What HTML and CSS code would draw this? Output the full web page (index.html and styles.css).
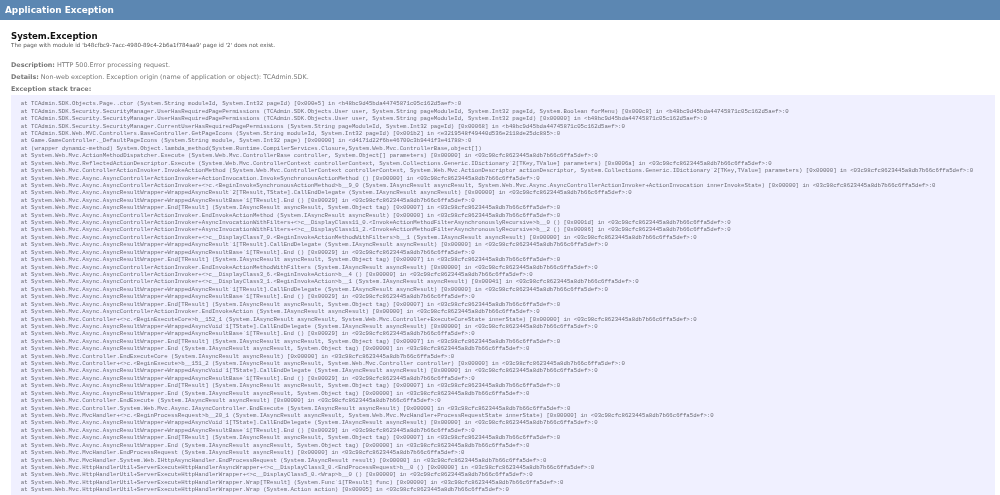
FILE: index.html
```html
<!DOCTYPE html>
<html lang="en">
<head>
<meta charset="utf-8">
<title>Application Exception</title>
<link rel="stylesheet" href="styles.css">
</head>
<body>
<div class="page">
<header class="banner">Application Exception</header>
<main class="content">
<h2 class="title">System.Exception</h2>
<p class="message">The page with module id 'b48cfbc9-7acc-4980-89c4-2b6a1f784aa9' page id '2' does not exist.</p>
<p class="info first"><b>Description:</b> HTTP 500.Error processing request.</p>
<p class="info"><b>Details:</b> Non-web exception. Exception origin (name of application or object): TCAdmin.SDK.</p>
<p class="info trace-label"><b>Exception stack trace:</b></p>
<pre class="trace">  at TCAdmin.SDK.Objects.Page..ctor (System.String moduleId, System.Int32 pageId) [0x000e5] in &lt;b48bc9d45bda44745871c05c162d5aef&gt;:0
  at TCAdmin.SDK.Security.SecurityManager.UserHasRequiredPagePermissions (TCAdmin.SDK.Objects.User user, System.String pageModuleId, System.Int32 pageId, System.Boolean forMenu) [0x000c8] in &lt;b48bc9d45bda44745871c05c162d5aef&gt;:0
  at TCAdmin.SDK.Security.SecurityManager.UserHasRequiredPagePermissions (TCAdmin.SDK.Objects.User user, System.String pageModuleId, System.Int32 pageId) [0x00000] in &lt;b48bc9d45bda44745871c05c162d5aef&gt;:0
  at TCAdmin.SDK.Security.SecurityManager.CurrentUserHasRequiredPagePermissions (System.String pageModuleId, System.Int32 pageId) [0x00068] in &lt;b48bc9d45bda44745871c05c162d5aef&gt;:0
  at TCAdmin.SDK.Web.MVC.Controllers.BaseController.GetPageIcons (System.String moduleId, System.Int32 pageId) [0x001b2] in &lt;e3219548f49440d536e2118de25dc885&gt;:0
  at Game.GameController._DefaultPageIcons (System.String module, System.Int32 page) [0x00000] in &lt;d4171d22f6be46700c3b9441f3e41788&gt;:0
  at (wrapper dynamic-method) System.Object.lambda_method(System.Runtime.CompilerServices.Closure,System.Web.Mvc.ControllerBase,object[])
  at System.Web.Mvc.ActionMethodDispatcher.Execute (System.Web.Mvc.ControllerBase controller, System.Object[] parameters) [0x00000] in &lt;03c98cfc8623445a8db7b66c6ffa5def&gt;:0
  at System.Web.Mvc.ReflectedActionDescriptor.Execute (System.Web.Mvc.ControllerContext controllerContext, System.Collections.Generic.IDictionary`2[TKey,TValue] parameters) [0x0006a] in &lt;03c98cfc8623445a8db7b66c6ffa5def&gt;:0
  at System.Web.Mvc.ControllerActionInvoker.InvokeActionMethod (System.Web.Mvc.ControllerContext controllerContext, System.Web.Mvc.ActionDescriptor actionDescriptor, System.Collections.Generic.IDictionary`2[TKey,TValue] parameters) [0x00000] in &lt;03c98cfc8623445a8db7b66c6ffa5def&gt;:0
  at System.Web.Mvc.Async.AsyncControllerActionInvoker+ActionInvocation.InvokeSynchronousActionMethod () [0x00000] in &lt;03c98cfc8623445a8db7b66c6ffa5def&gt;:0
  at System.Web.Mvc.Async.AsyncControllerActionInvoker+&lt;&gt;c.&lt;BeginInvokeSynchronousActionMethod&gt;b__9_0 (System.IAsyncResult asyncResult, System.Web.Mvc.Async.AsyncControllerActionInvoker+ActionInvocation innerInvokeState) [0x00000] in &lt;03c98cfc8623445a8db7b66c6ffa5def&gt;:0
  at System.Web.Mvc.Async.AsyncResultWrapper+WrappedAsyncResult`2[TResult,TState].CallEndDelegate (System.IAsyncResult asyncResult) [0x00000] in &lt;03c98cfc8623445a8db7b66c6ffa5def&gt;:0
  at System.Web.Mvc.Async.AsyncResultWrapper+WrappedAsyncResultBase`1[TResult].End () [0x00029] in &lt;03c98cfc8623445a8db7b66c6ffa5def&gt;:0
  at System.Web.Mvc.Async.AsyncResultWrapper.End[TResult] (System.IAsyncResult asyncResult, System.Object tag) [0x00007] in &lt;03c98cfc8623445a8db7b66c6ffa5def&gt;:0
  at System.Web.Mvc.Async.AsyncControllerActionInvoker.EndInvokeActionMethod (System.IAsyncResult asyncResult) [0x00000] in &lt;03c98cfc8623445a8db7b66c6ffa5def&gt;:0
  at System.Web.Mvc.Async.AsyncControllerActionInvoker+AsyncInvocationWithFilters+&lt;&gt;c__DisplayClass11_0.&lt;InvokeActionMethodFilterAsynchronouslyRecursive&gt;b__0 () [0x0001d] in &lt;03c98cfc8623445a8db7b66c6ffa5def&gt;:0
  at System.Web.Mvc.Async.AsyncControllerActionInvoker+AsyncInvocationWithFilters+&lt;&gt;c__DisplayClass11_2.&lt;InvokeActionMethodFilterAsynchronouslyRecursive&gt;b__2 () [0x00086] in &lt;03c98cfc8623445a8db7b66c6ffa5def&gt;:0
  at System.Web.Mvc.Async.AsyncControllerActionInvoker+&lt;&gt;c__DisplayClass7_0.&lt;BeginInvokeActionMethodWithFilters&gt;b__1 (System.IAsyncResult asyncResult) [0x00000] in &lt;03c98cfc8623445a8db7b66c6ffa5def&gt;:0
  at System.Web.Mvc.Async.AsyncResultWrapper+WrappedAsyncResult`1[TResult].CallEndDelegate (System.IAsyncResult asyncResult) [0x00000] in &lt;03c98cfc8623445a8db7b66c6ffa5def&gt;:0
  at System.Web.Mvc.Async.AsyncResultWrapper+WrappedAsyncResultBase`1[TResult].End () [0x00029] in &lt;03c98cfc8623445a8db7b66c6ffa5def&gt;:0
  at System.Web.Mvc.Async.AsyncResultWrapper.End[TResult] (System.IAsyncResult asyncResult, System.Object tag) [0x00007] in &lt;03c98cfc8623445a8db7b66c6ffa5def&gt;:0
  at System.Web.Mvc.Async.AsyncControllerActionInvoker.EndInvokeActionMethodWithFilters (System.IAsyncResult asyncResult) [0x00000] in &lt;03c98cfc8623445a8db7b66c6ffa5def&gt;:0
  at System.Web.Mvc.Async.AsyncControllerActionInvoker+&lt;&gt;c__DisplayClass3_6.&lt;BeginInvokeAction&gt;b__4 () [0x00000] in &lt;03c98cfc8623445a8db7b66c6ffa5def&gt;:0
  at System.Web.Mvc.Async.AsyncControllerActionInvoker+&lt;&gt;c__DisplayClass3_1.&lt;BeginInvokeAction&gt;b__1 (System.IAsyncResult asyncResult) [0x00041] in &lt;03c98cfc8623445a8db7b66c6ffa5def&gt;:0
  at System.Web.Mvc.Async.AsyncResultWrapper+WrappedAsyncResult`1[TResult].CallEndDelegate (System.IAsyncResult asyncResult) [0x00000] in &lt;03c98cfc8623445a8db7b66c6ffa5def&gt;:0
  at System.Web.Mvc.Async.AsyncResultWrapper+WrappedAsyncResultBase`1[TResult].End () [0x00029] in &lt;03c98cfc8623445a8db7b66c6ffa5def&gt;:0
  at System.Web.Mvc.Async.AsyncResultWrapper.End[TResult] (System.IAsyncResult asyncResult, System.Object tag) [0x00007] in &lt;03c98cfc8623445a8db7b66c6ffa5def&gt;:0
  at System.Web.Mvc.Async.AsyncControllerActionInvoker.EndInvokeAction (System.IAsyncResult asyncResult) [0x00000] in &lt;03c98cfc8623445a8db7b66c6ffa5def&gt;:0
  at System.Web.Mvc.Controller+&lt;&gt;c.&lt;BeginExecuteCore&gt;b__152_1 (System.IAsyncResult asyncResult, System.Web.Mvc.Controller+ExecuteCoreState innerState) [0x00000] in &lt;03c98cfc8623445a8db7b66c6ffa5def&gt;:0
  at System.Web.Mvc.Async.AsyncResultWrapper+WrappedAsyncVoid`1[TState].CallEndDelegate (System.IAsyncResult asyncResult) [0x00000] in &lt;03c98cfc8623445a8db7b66c6ffa5def&gt;:0
  at System.Web.Mvc.Async.AsyncResultWrapper+WrappedAsyncResultBase`1[TResult].End () [0x00029] in &lt;03c98cfc8623445a8db7b66c6ffa5def&gt;:0
  at System.Web.Mvc.Async.AsyncResultWrapper.End[TResult] (System.IAsyncResult asyncResult, System.Object tag) [0x00007] in &lt;03c98cfc8623445a8db7b66c6ffa5def&gt;:0
  at System.Web.Mvc.Async.AsyncResultWrapper.End (System.IAsyncResult asyncResult, System.Object tag) [0x00000] in &lt;03c98cfc8623445a8db7b66c6ffa5def&gt;:0
  at System.Web.Mvc.Controller.EndExecuteCore (System.IAsyncResult asyncResult) [0x00000] in &lt;03c98cfc8623445a8db7b66c6ffa5def&gt;:0
  at System.Web.Mvc.Controller+&lt;&gt;c.&lt;BeginExecute&gt;b__151_2 (System.IAsyncResult asyncResult, System.Web.Mvc.Controller controller) [0x00000] in &lt;03c98cfc8623445a8db7b66c6ffa5def&gt;:0
  at System.Web.Mvc.Async.AsyncResultWrapper+WrappedAsyncVoid`1[TState].CallEndDelegate (System.IAsyncResult asyncResult) [0x00000] in &lt;03c98cfc8623445a8db7b66c6ffa5def&gt;:0
  at System.Web.Mvc.Async.AsyncResultWrapper+WrappedAsyncResultBase`1[TResult].End () [0x00029] in &lt;03c98cfc8623445a8db7b66c6ffa5def&gt;:0
  at System.Web.Mvc.Async.AsyncResultWrapper.End[TResult] (System.IAsyncResult asyncResult, System.Object tag) [0x00007] in &lt;03c98cfc8623445a8db7b66c6ffa5def&gt;:0
  at System.Web.Mvc.Async.AsyncResultWrapper.End (System.IAsyncResult asyncResult, System.Object tag) [0x00000] in &lt;03c98cfc8623445a8db7b66c6ffa5def&gt;:0
  at System.Web.Mvc.Controller.EndExecute (System.IAsyncResult asyncResult) [0x00000] in &lt;03c98cfc8623445a8db7b66c6ffa5def&gt;:0
  at System.Web.Mvc.Controller.System.Web.Mvc.Async.IAsyncController.EndExecute (System.IAsyncResult asyncResult) [0x00000] in &lt;03c98cfc8623445a8db7b66c6ffa5def&gt;:0
  at System.Web.Mvc.MvcHandler+&lt;&gt;c.&lt;BeginProcessRequest&gt;b__20_1 (System.IAsyncResult asyncResult, System.Web.Mvc.MvcHandler+ProcessRequestState innerState) [0x00000] in &lt;03c98cfc8623445a8db7b66c6ffa5def&gt;:0
  at System.Web.Mvc.Async.AsyncResultWrapper+WrappedAsyncVoid`1[TState].CallEndDelegate (System.IAsyncResult asyncResult) [0x00000] in &lt;03c98cfc8623445a8db7b66c6ffa5def&gt;:0
  at System.Web.Mvc.Async.AsyncResultWrapper+WrappedAsyncResultBase`1[TResult].End () [0x00029] in &lt;03c98cfc8623445a8db7b66c6ffa5def&gt;:0
  at System.Web.Mvc.Async.AsyncResultWrapper.End[TResult] (System.IAsyncResult asyncResult, System.Object tag) [0x00007] in &lt;03c98cfc8623445a8db7b66c6ffa5def&gt;:0
  at System.Web.Mvc.Async.AsyncResultWrapper.End (System.IAsyncResult asyncResult, System.Object tag) [0x00000] in &lt;03c98cfc8623445a8db7b66c6ffa5def&gt;:0
  at System.Web.Mvc.MvcHandler.EndProcessRequest (System.IAsyncResult asyncResult) [0x00000] in &lt;03c98cfc8623445a8db7b66c6ffa5def&gt;:0
  at System.Web.Mvc.MvcHandler.System.Web.IHttpAsyncHandler.EndProcessRequest (System.IAsyncResult result) [0x00000] in &lt;03c98cfc8623445a8db7b66c6ffa5def&gt;:0
  at System.Web.Mvc.HttpHandlerUtil+ServerExecuteHttpHandlerAsyncWrapper+&lt;&gt;c__DisplayClass3_0.&lt;EndProcessRequest&gt;b__0 () [0x00000] in &lt;03c98cfc8623445a8db7b66c6ffa5def&gt;:0
  at System.Web.Mvc.HttpHandlerUtil+ServerExecuteHttpHandlerWrapper+&lt;&gt;c__DisplayClass5_0.&lt;Wrap&gt;b__0 () [0x00000] in &lt;03c98cfc8623445a8db7b66c6ffa5def&gt;:0
  at System.Web.Mvc.HttpHandlerUtil+ServerExecuteHttpHandlerWrapper.Wrap[TResult] (System.Func`1[TResult] func) [0x00000] in &lt;03c98cfc8623445a8db7b66c6ffa5def&gt;:0
  at System.Web.Mvc.HttpHandlerUtil+ServerExecuteHttpHandlerWrapper.Wrap (System.Action action) [0x00005] in &lt;03c98cfc8623445a8db7b66c6ffa5def&gt;:0
  at System.Web.Mvc.HttpHandlerUtil+ServerExecuteHttpHandlerAsyncWrapper.EndProcessRequest (System.IAsyncResult result) [0x00005] in &lt;03c98cfc8623445a8db7b66c6ffa5def&gt;:0</pre>
</main>
</div>
</body>
</html>
```
FILE: styles.css
```css
html, body {
  margin: 0;
  height: 100%;
  overflow: hidden;
  background: #fff;
}
.page {
  font-family: "DejaVu Sans", Verdana, sans-serif;
  color: #000;
  filter: blur(0.4px);
}
.banner {
  background: #5c87b2;
  color: #fff;
  font-size: 8.9px;
  font-weight: bold;
  height: 20px;
  line-height: 20px;
  padding-left: 5px;
}
.content {
  padding: 11px 5px 0 11px;
}
.title {
  margin: 0;
  font-size: 8.6px;
  line-height: 11px;
  font-weight: bold;
  color: #111;
}
.message {
  margin: 1px 0 0;
  font-size: 5.6px;
  line-height: 7px;
  color: #555;
  text-rendering: geometricPrecision;
}
.info {
  margin: 5.5px 0 0;
  font-size: 6.4px;
  line-height: 7px;
  color: #777;
}
.info.first {
  margin-top: 11.5px;
}
.info.trace-label {
  margin-top: 4.5px;
}
.trace {
  margin: 2.5px 0 0;
  padding: 5.3px 0 0 3px;
  background: #f0f0ff;
  font-family: "Liberation Mono", "DejaVu Sans Mono", monospace;
  font-size: 5.7px;
  line-height: 7.42px;
  color: #6a6a72;
  overflow: hidden;
}
```
